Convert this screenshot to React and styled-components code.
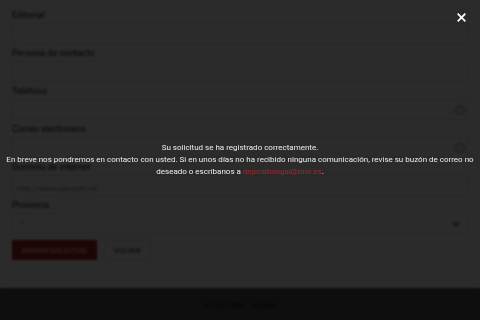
import React from "react";
import styled, { createGlobalStyle } from "styled-components";

const GlobalStyle = createGlobalStyle`
  html, body {
    margin: 0;
    padding: 0;
    background: #ffffff;
    font-family: Roboto, "Liberation Sans", Arial, sans-serif;
  }
`;

const fields = [
  { label: "Editorial" },
  { label: "Persona de contacto" },
  { label: "Teléfono", help: true },
  { label: "Correo electrónico", help: true },
  { label: "Dominio de internet", placeholder: "http://www.ejemplo.es" },
];

export default function App() {
  return (
    <>
      <GlobalStyle />
      <Page>
        <Form>
          {fields.map((f) => (
            <Field key={f.label}>
              <Label>{f.label}</Label>
              <InputBox>
                <Input placeholder={f.placeholder || ""} />
                {f.help && <HelpIcon>?</HelpIcon>}
              </InputBox>
            </Field>
          ))}
          <Field>
            <Label>Provincia</Label>
            <InputBox>
              <SelectBox>
                <span>--</span>
                <svg width="10" height="10" viewBox="0 0 24 24" fill="none" stroke="#222" strokeWidth="3" strokeLinecap="round" strokeLinejoin="round">
                  <path d="M6 9l6 6 6-6" />
                </svg>
              </SelectBox>
            </InputBox>
          </Field>
          <Actions>
            <Button $primary>Enviar solicitud</Button>
            <Button>Volver</Button>
          </Actions>
        </Form>
        <Footer>
          <FooterLink>Aviso legal</FooterLink>
          <FooterLink>Ayuda</FooterLink>
        </Footer>
      </Page>

      <Overlay>
        <Close aria-label="Cerrar">
          <svg width="9" height="9" viewBox="0 0 10 10" stroke="#fff" strokeWidth="2" strokeLinecap="square">
            <path d="M1.5 1.5l7 7M8.5 1.5l-7 7" />
          </svg>
        </Close>
        <Message>
          Su solicitud se ha registrado correctamente.
          <br />
          En breve nos pondremos en contacto con usted. Si en unos días no ha
          recibido ninguna comunicación, revise su buzón de correo no deseado o
          escríbanos a <Mail>depositolegal@bne.es</Mail>.
        </Message>
      </Overlay>
    </>
  );
}

const Page = styled.div`
  min-height: 320px;
  display: flex;
  flex-direction: column;
  background: #ffffff;
`;

const Form = styled.div`
  padding: 9px 12px 0;
  display: flex;
  flex-direction: column;
`;

const Field = styled.div`
  display: flex;
  flex-direction: column;
  margin-bottom: 3px;
`;

const Label = styled.label`
  font-size: 9px;
  line-height: 12px;
  color: #111;
  margin-bottom: 2px;
`;

const InputBox = styled.div`
  position: relative;
  height: 21px;
  border: 1px solid #d6d6d6;
  box-sizing: border-box;
`;

const Input = styled.input`
  width: 100%;
  height: 100%;
  border: none;
  outline: none;
  padding: 0 4px;
  box-sizing: border-box;
  font-family: inherit;
  font-size: 8px;
  background: transparent;
  &::placeholder {
    color: #888;
  }
`;

const HelpIcon = styled.span`
  position: absolute;
  right: 2px;
  top: 50%;
  transform: translateY(-50%);
  width: 8px;
  height: 8px;
  border: 1px solid #777;
  border-radius: 50%;
  font-size: 6px;
  line-height: 8px;
  text-align: center;
  color: #777;
`;

const SelectBox = styled.div`
  height: 100%;
  display: flex;
  align-items: center;
  justify-content: space-between;
  padding: 0 6px 0 7px;
  font-size: 8px;
  color: #333;
`;

const Actions = styled.div`
  display: flex;
  gap: 7px;
  margin-top: 3px;
`;

const Button = styled.button`
  height: 20px;
  padding: 0 9px;
  border: 1px solid ${(p) => (p.$primary ? "#8e1616" : "#dcdcdc")};
  background: ${(p) => (p.$primary ? "#b32020" : "#ffffff")};
  color: ${(p) => (p.$primary ? "#ffffff" : "#222")};
  text-transform: uppercase;
  font-family: inherit;
  font-size: 7.5px;
  border-radius: 1px;
`;

const Footer = styled.footer`
  margin-top: auto;
  height: 32px;
  background: #525252;
  display: flex;
  justify-content: center;
  align-items: center;
  gap: 10px;
`;

const FooterLink = styled.a`
  font-size: 8px;
  color: #1c1c1c;
`;

const Overlay = styled.div`
  position: fixed;
  inset: 0;
  background: rgba(0, 0, 0, 0.83);
  backdrop-filter: blur(0.8px);
  display: flex;
  align-items: center;
  justify-content: center;
`;

const Close = styled.button`
  position: absolute;
  top: 12px;
  right: 13px;
  width: 11px;
  height: 11px;
  padding: 0;
  border: none;
  background: transparent;
  display: flex;
  align-items: center;
  justify-content: center;
`;

const Message = styled.p`
  margin: 0;
  padding: 0 4px;
  text-align: center;
  color: #ececec;
  font-size: 8px;
  line-height: 12px;
`;

const Mail = styled.a`
  color: #a82228;
`;
